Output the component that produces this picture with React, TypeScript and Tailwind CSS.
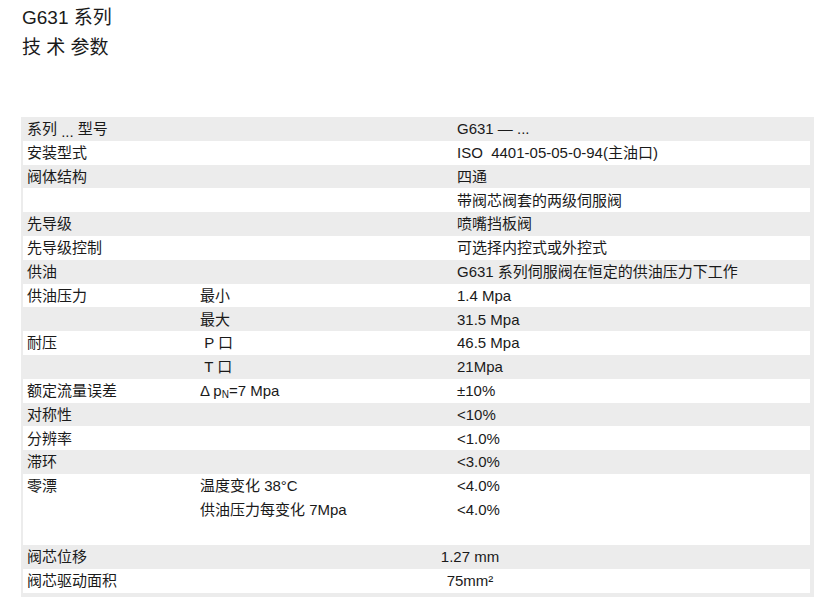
import React from "react";

type Row = {
  a?: React.ReactNode;
  b?: React.ReactNode;
  c?: React.ReactNode;
  gray: boolean;
};

const rows: Row[] = [
  {
    a: (
      <>
        系列 <span className="relative top-[3px]">...</span> 型号
      </>
    ),
    c: "G631 — ...",
    gray: true,
  },
  { a: "安装型式", c: "ISO\u00a0\u00a04401-05-05-0-94(主油口)", gray: false },
  { a: "阀体结构", c: "四通", gray: true },
  { c: "带阀芯阀套的两级伺服阀", gray: false },
  { a: "先导级", c: "喷嘴挡板阀", gray: true },
  { a: "先导级控制", c: "可选择内控式或外控式", gray: false },
  { a: "供油", c: "G631 系列伺服阀在恒定的供油压力下工作", gray: true },
  { a: "供油压力", b: "最小", c: "1.4 Mpa", gray: false },
  { b: "最大", c: "31.5 Mpa", gray: true },
  { a: "耐压", b: "\u00a0P 口", c: "46.5 Mpa", gray: false },
  { b: "\u00a0T 口", c: "21Mpa", gray: true },
  {
    a: "额定流量误差",
    b: (
      <>
        Δ p<sub className="text-[10px]">N</sub>=7 Mpa
      </>
    ),
    c: "±10%",
    gray: false,
  },
  { a: "对称性", c: "<10%", gray: true },
  { a: "分辨率", c: "<1.0%", gray: false },
  { a: "滞环", c: "<3.0%", gray: true },
];

function TRow({ a, b, c, gray }: Row) {
  return (
    <div className={`flex h-[23.8px] items-center pl-[4px] pt-[1px] ${gray ? "" : "bg-white"}`}>
      <div className="w-[173px] shrink-0 whitespace-nowrap">{a}</div>
      <div className="w-[257px] shrink-0 whitespace-nowrap">{b}</div>
      <div className="flex-1 whitespace-nowrap">{c}</div>
    </div>
  );
}

export default function App() {
  return (
    <div
      className="w-[834px] h-[606px] bg-white text-[#1a1a1a] overflow-hidden"
      style={{ fontFamily: '"Liberation Sans", "Noto Sans CJK SC", Arial, sans-serif' }}
    >
      <div className="pl-[22px] pt-[3px] text-[19px] leading-[30px]">
        <div>G631 系列</div>
        <div>技 术 参数</div>
      </div>

      <div className="mt-[54px] ml-[21px] w-[793px] bg-[#ececec] pl-[2px] pr-[4px] pb-[4px] text-[15px]">
        {rows.map((r, i) => (
          <TRow key={i} {...r} />
        ))}

        <div className="bg-white pl-[4px] h-[71.4px]">
          <div className="flex h-[23.8px] items-center pt-[1px]">
            <div className="w-[173px] shrink-0">零漂</div>
            <div className="w-[257px] shrink-0 whitespace-nowrap">温度变化 38°C</div>
            <div className="flex-1">&lt;4.0%</div>
          </div>
          <div className="flex h-[23.8px] items-center pt-[1px]">
            <div className="w-[173px] shrink-0"></div>
            <div className="w-[257px] shrink-0 whitespace-nowrap">供油压力每变化 7Mpa</div>
            <div className="flex-1">&lt;4.0%</div>
          </div>
        </div>

        <div className="flex h-[23.8px] items-center pl-[4px] pt-[1px]">
          <div className="w-[173px] shrink-0">阀芯位移</div>
          <div className="w-[540px] shrink-0 text-center">1.27 mm</div>
        </div>
        <div className="flex h-[23.8px] items-center pl-[4px] pt-[1px] bg-white">
          <div className="w-[173px] shrink-0">阀芯驱动面积</div>
          <div className="w-[540px] shrink-0 text-center">75mm²</div>
        </div>
      </div>
    </div>
  );
}
